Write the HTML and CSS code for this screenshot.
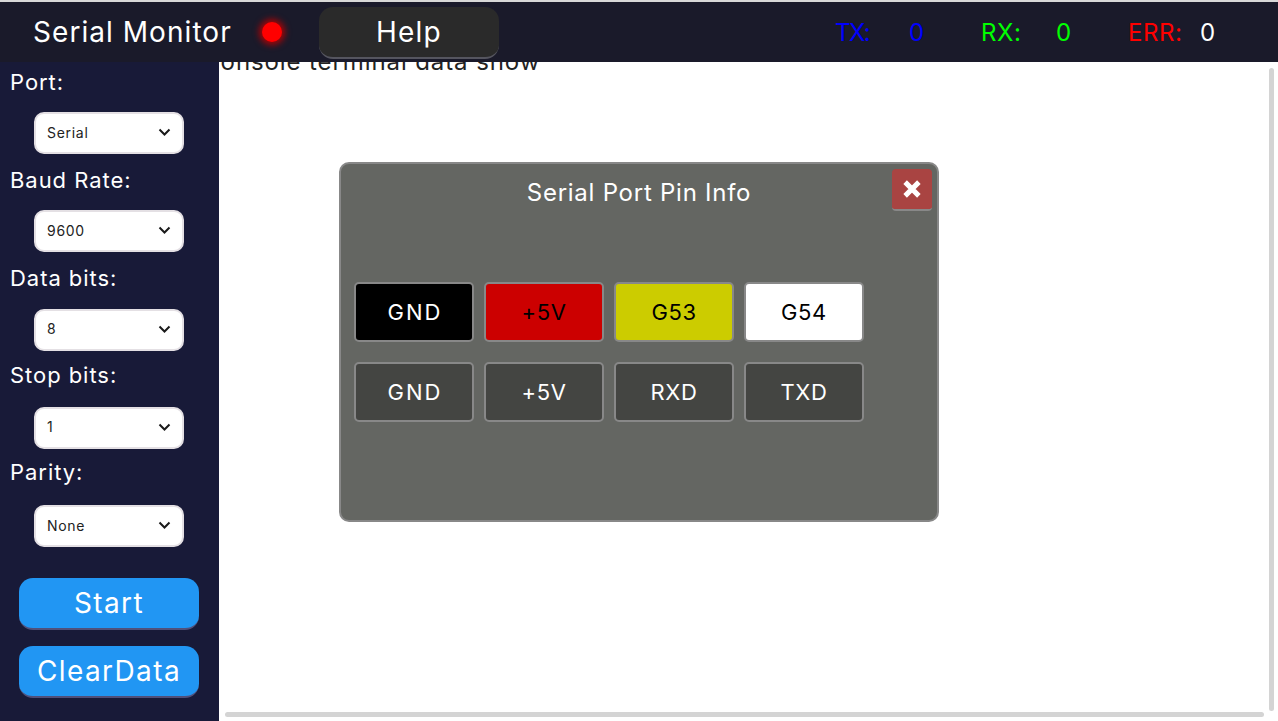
FILE: index.html
```html
<!DOCTYPE html>
<html lang="en">
<head>
<meta charset="utf-8">
<title>Serial Monitor</title>
<link rel="stylesheet" href="styles.css">
</head>
<body>
<header class="header">
  <h1 class="title">Serial Monitor</h1>
  <span class="led"></span>
  <button class="help">Help</button>
  <div class="counters">
    <span class="count-label tx tx-label">TX:</span><span class="count-value tx">0</span>
    <span class="count-label rx">RX:</span><span class="count-value rx">0</span>
    <span class="count-label err">ERR:</span><span class="count-value plain">0</span>
  </div>
</header>
<div class="body-row">
  <aside class="sidebar">
    <div class="field"><label class="field-label">Port:</label>
      <div class="select"><span>Serial</span><svg class="chev" viewBox="0 0 12 8"><path d="M1 1.5l5 5 5-5"/></svg></div></div>
    <div class="field"><label class="field-label">Baud Rate:</label>
      <div class="select"><span>9600</span><svg class="chev" viewBox="0 0 12 8"><path d="M1 1.5l5 5 5-5"/></svg></div></div>
    <div class="field"><label class="field-label nudge-1">Data bits:</label>
      <div class="select"><span>8</span><svg class="chev" viewBox="0 0 12 8"><path d="M1 1.5l5 5 5-5"/></svg></div></div>
    <div class="field"><label class="field-label nudge-2">Stop bits:</label>
      <div class="select"><span>1</span><svg class="chev" viewBox="0 0 12 8"><path d="M1 1.5l5 5 5-5"/></svg></div></div>
    <div class="field"><label class="field-label nudge-3">Parity:</label>
      <div class="select"><span>None</span><svg class="chev" viewBox="0 0 12 8"><path d="M1 1.5l5 5 5-5"/></svg></div></div>
    <button class="action first">Start</button>
    <button class="action">ClearData</button>
  </aside>
  <main class="main">
    <p class="console">console terminal data show</p>
    <div class="scroll-v"></div>
    <div class="scroll-h"></div>
    <section class="modal">
      <h2 class="modal-title">Serial Port Pin Info</h2>
      <button class="close"><svg viewBox="0 0 16 16"><path d="M2.5 2.5l11 11M13.5 2.5l-11 11"/></svg></button>
      <div class="pins">
        <div class="pin pin-gnd pin-black">GND</div>
        <div class="pin pin-red">+5V</div>
        <div class="pin pin-yellow">G53</div>
        <div class="pin pin-white">G54</div>
        <div class="pin pin-gnd">GND</div>
        <div class="pin">+5V</div>
        <div class="pin">RXD</div>
        <div class="pin">TXD</div>
      </div>
    </section>
  </main>
</div>
</body>
</html>
```
FILE: styles.css
```css
* { box-sizing: border-box; }
html, body { margin: 0; padding: 0; height: 100%; overflow: hidden; }
body {
  font-family: Inter, "Noto Sans", sans-serif;
  background: #fff;
  display: flex;
  flex-direction: column;
  border-top: 2px solid #d8d8d8;
}
button { font-family: inherit; cursor: pointer; }

.header {
  height: 60px;
  flex: none;
  background: #1a1a2a;
  display: flex;
  align-items: center;
  padding-left: 33px;
  position: relative;
  z-index: 2;
}
.title { margin: 0; font-size: 28px; font-weight: 400; color: #fff; letter-spacing: 1.05px; width: 226px; white-space: nowrap; }
.led {
  width: 20px; height: 20px; border-radius: 50%;
  background: #f00;
  box-shadow: 0 0 6px 3px rgba(190,0,0,.85);
  margin-left: 3px;
  margin-right: 37px;
}
.help {
  width: 180px; height: 52px;
  margin-top: 2px;
  padding: 0;
  background: #2a2a2a;
  color: #fff;
  border: 0;
  border-bottom: 2px solid #55555f;
  border-radius: 14px;
  font-size: 28px;
  letter-spacing: 1.2px;
}
.counters {
  margin-left: 336px;
  padding-top: 2px;
  display: grid;
  grid-template-columns: 73px 73px 74px 73px 72px 40px;
  font-size: 24px;
  line-height: 30px;
}
.count-value { padding-left: 1px; }
.count-label { letter-spacing: .6px; }
.tx-label { letter-spacing: -1.5px; }
.tx { color: #00f; }
.rx { color: #0f0; }
.err { color: #f00; }
.plain { color: #fff; margin-left: -1px; }

.body-row { flex: 1; display: flex; min-height: 0; }
.sidebar {
  width: 219px; flex: none;
  background: #181a38;
  padding: 6px 1px 0 0;
  display: flex;
  flex-direction: column;
  align-items: center;
}
.field { width: 100%; height: 98.25px; display: flex; flex-direction: column; align-items: center; flex: none; }
.field-label {
  align-self: flex-start;
  margin-left: 10px;
  color: #fff;
  font-size: 22px;
  line-height: 28px;
  letter-spacing: .95px;
}
.nudge-1 { margin-top: -1px; margin-bottom: 1px; }
.nudge-2 { margin-top: -2px; margin-bottom: 2px; }
.nudge-3 { margin-top: -3px; margin-bottom: 3px; }
.select {
  margin-top: 16px;
  width: 150px; height: 42px;
  background: #fff;
  border: 2px solid #e4e0e4;
  border-radius: 10px;
  padding: 0 11px 2px 11px;
  display: flex;
  align-items: center;
  justify-content: space-between;
  font-size: 14px;
  letter-spacing: .7px;
  color: #222;
  flex: none;
}
.chev { width: 13px; height: 8px; fill: none; stroke: #1a1a1a; stroke-width: 2; }
.action {
  width: 180px; height: 52px;
  background: #2196f3;
  color: #fff;
  border: 0;
  border-bottom: 2px solid #50507a;
  border-radius: 14px;
  font-size: 28px;
  letter-spacing: 1.4px;
  margin-top: 16px;
  flex: none;
}
.action.first { margin-top: 19px; }

.main { flex: 1; position: relative; overflow: hidden; background: #fff; }
.console {
  margin: -15px 0 0 -13px;
  font-size: 24px;
  line-height: 30px;
  color: #222;
  letter-spacing: .9px;
  white-space: nowrap;
}
.scroll-v { position: absolute; left: 1050px; top: 6px; width: 5px; height: 643px; background: #d4d4d4; border-radius: 3px; }
.scroll-h { position: absolute; left: 6px; top: 650px; width: 1039px; height: 5px; background: #d4d4d4; border-radius: 3px; }

.modal {
  position: absolute;
  left: 120px; top: 100px;
  width: 600px; height: 360px;
  background: #646662;
  border: 2px solid #888;
  border-radius: 10px;
  padding: 14px 13px 0;
}
.modal-title { margin: 0; height: 104px; text-align: center; font-size: 24px; font-weight: 400; line-height: 30px; color: #fff; letter-spacing: .75px; }
.close {
  position: absolute;
  right: 5px; top: 5px;
  width: 40px; height: 42px;
  background: #a94442;
  border: 0;
  border-bottom: 2px solid #888;
  border-radius: 4px;
  padding: 0;
  display: flex; align-items: center; justify-content: center;
}
.close svg { width: 20px; height: 20px; fill: none; stroke: #fff; stroke-width: 4; }
.pins { display: grid; grid-template-columns: repeat(4, 120px); grid-auto-rows: 60px; gap: 20px 10px; }
.pin {
  background: #444542;
  border: 2px solid #888;
  border-radius: 5px;
  color: #fff;
  font-size: 22px;
  letter-spacing: .6px;
  display: flex; align-items: center; justify-content: center;
}
.pin-gnd { letter-spacing: 2px; padding-left: 2px; }
.pin-black { background: #000; }
.pin-red { background: #c00; color: #000; }
.pin-yellow { background: #cc0; color: #000; }
.pin-white { background: #fff; color: #000; }
```
